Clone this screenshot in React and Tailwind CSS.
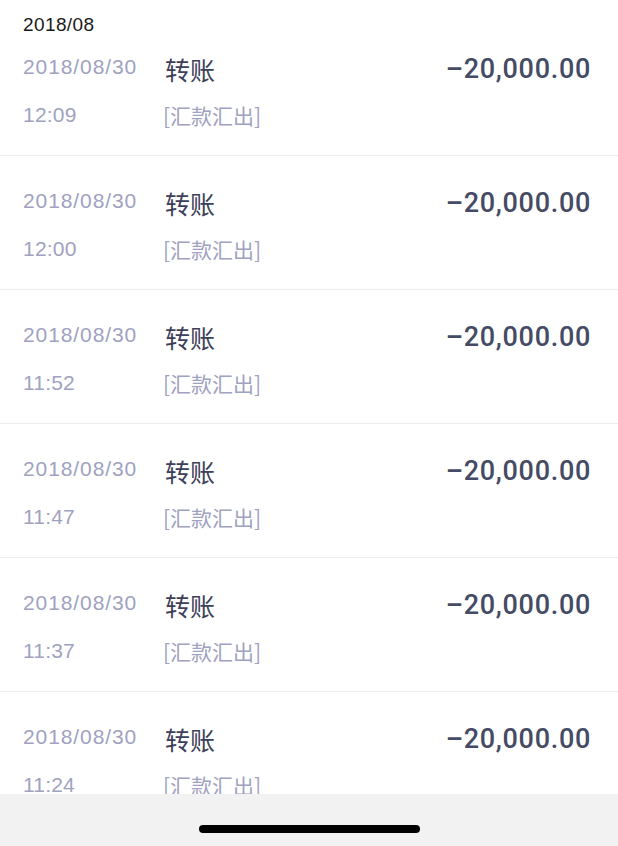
const rows = [
  { time: "12:09" },
  { time: "12:00" },
  { time: "11:52" },
  { time: "11:47" },
  { time: "11:37" },
  { time: "11:24" },
];

const sans = "font-['Liberation_Sans','Noto_Sans_CJK_SC',sans-serif]";
const cjk = "font-['Noto_Sans_CJK_SC',sans-serif]";

const Row = ({ time, first }) => (
  <div
    className={`flex shrink-0 border-b border-[#ececec] pl-[23px] pr-[27px] ${
      first ? "h-[112px] pt-[8px]" : "h-[134px] pt-[30px]"
    }`}
  >
    <div className={`w-[142px] ${sans} text-[21px] tracking-[0.9px] text-[#9fa2c0]`}>
      <div className="h-[30px] leading-[30px]">2018/08/30</div>
      <div className="mt-[18px] h-[30px] leading-[30px] tracking-[0.2px]">{time}</div>
    </div>
    <div className="flex-1">
      <div className={`h-[34px] leading-[34px] ${cjk} text-[25px] text-[#3c4058]`}>转账</div>
      <div className={`mt-[14px] h-[30px] leading-[30px] -ml-[2px] ${cjk} text-[21px] text-[#9fa2c0]`}>
        [汇款汇出]
      </div>
    </div>
    <div className="h-[34px] font-['Roboto',sans-serif] text-[27px] font-medium leading-[34px] tracking-[0.7px] text-[#454b64]">
      –20,000.00
    </div>
  </div>
);

export default function App() {
  return (
    <div className="flex h-[846px] w-[618px] flex-col bg-white">
      <div className="flex-1 overflow-hidden">
        <div className={`h-[44px] pl-[23px] pt-[13px] ${sans} text-[19px] tracking-[0.4px] leading-[24px] text-[#1a1a1a]`}>
          2018/08
        </div>
        {rows.map((r, i) => (
          <Row key={i} time={r.time} first={i === 0} />
        ))}
      </div>
      <div className="flex h-[52px] shrink-0 items-center justify-center bg-[#f2f2f2]">
        <div className="mt-[18px] h-[8px] w-[221px] rounded-full bg-black" />
      </div>
    </div>
  );
}
